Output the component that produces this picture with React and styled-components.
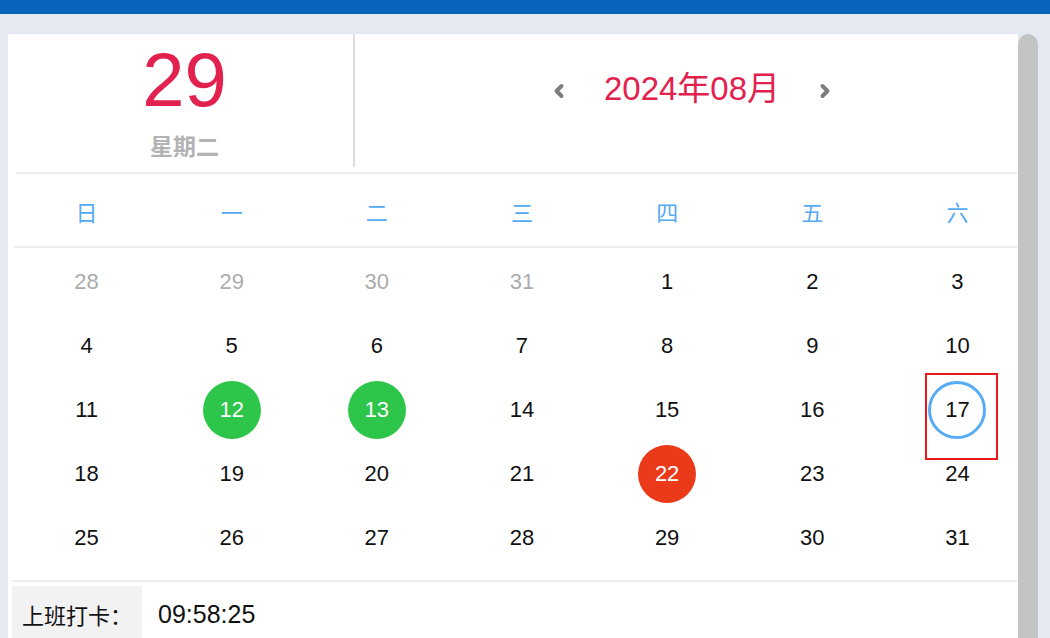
import styled, { createGlobalStyle } from "styled-components";

const GlobalStyle = createGlobalStyle`
  html, body {
    margin: 0;
    padding: 0;
    background: #e4e9f2;
    font-family: "Liberation Sans", "Noto Sans CJK SC", sans-serif;
    overflow: hidden;
  }
`;

const weekdays = ["日", "一", "二", "三", "四", "五", "六"];

// status: muted = other month, work = green, late = red, today = blue ring
const weeks = [
  [
    { d: 28, s: "muted" },
    { d: 29, s: "muted" },
    { d: 30, s: "muted" },
    { d: 31, s: "muted" },
    { d: 1 },
    { d: 2 },
    { d: 3 },
  ],
  [{ d: 4 }, { d: 5 }, { d: 6 }, { d: 7 }, { d: 8 }, { d: 9 }, { d: 10 }],
  [
    { d: 11 },
    { d: 12, s: "work" },
    { d: 13, s: "work" },
    { d: 14 },
    { d: 15 },
    { d: 16 },
    { d: 17, s: "today", marked: true },
  ],
  [
    { d: 18 },
    { d: 19 },
    { d: 20 },
    { d: 21 },
    { d: 22, s: "late" },
    { d: 23 },
    { d: 24 },
  ],
  [{ d: 25 }, { d: 26 }, { d: 27 }, { d: 28 }, { d: 29 }, { d: 30 }, { d: 31 }],
];

const Chevron = ({ dir }) => (
  <svg width="12" height="16" viewBox="0 0 12 16">
    <path
      d={dir === "left" ? "M8.5 3 L3.5 8 L8.5 13" : "M3.5 3 L8.5 8 L3.5 13"}
      fill="none"
      stroke="#7d7d7d"
      strokeWidth="4"
      strokeLinecap="round"
      strokeLinejoin="round"
    />
  </svg>
);

export default function App() {
  return (
    <>
      <GlobalStyle />
      <TopBar />
      <Main>
        <Card>
          <Inner>
            <Header>
              <DateBlock>
                <BigDay>29</BigDay>
                <WeekName>星期二</WeekName>
              </DateBlock>
              <MonthBlock>
                <MonthNav>
                  <NavButton>
                    <Chevron dir="left" />
                  </NavButton>
                  <MonthTitle>2024年08月</MonthTitle>
                  <NavButton>
                    <Chevron dir="right" />
                  </NavButton>
                </MonthNav>
              </MonthBlock>
            </Header>
            <WeekRow>
              {weekdays.map((w) => (
                <WeekLabel key={w}>{w}</WeekLabel>
              ))}
            </WeekRow>
            <DayGrid>
              {weeks.flat().map((c, i) => (
                <DayCell key={i}>
                  <DayNum $status={c.s}>{c.d}</DayNum>
                  {c.marked && <Marker />}
                </DayCell>
              ))}
            </DayGrid>
          </Inner>
          <Footer>
            <PunchRow>
              <PunchLabel>上班打卡：</PunchLabel>
              <PunchTime>09:58:25</PunchTime>
            </PunchRow>
          </Footer>
        </Card>
        <ScrollThumb />
      </Main>
    </>
  );
}

const TopBar = styled.div`
  height: 14px;
  background: #0764bb;
`;

const Main = styled.div`
  display: flex;
  align-items: stretch;
  height: 604px;
  padding: 20px 0 0 8px;
`;

const Card = styled.div`
  width: 1010px;
  background: #fff;
  overflow: hidden;
  display: flex;
  flex-direction: column;
`;

const ScrollThumb = styled.div`
  width: 20px;
  background: #c4c4c4;
  border-radius: 10px 10px 0 0;
`;

const Inner = styled.div`
  width: 1017px;
  margin-left: 8px;
`;

const Header = styled.div`
  display: flex;
  height: 138px;
  border-bottom: 2px solid #eeeeee;
`;

const DateBlock = styled.div`
  box-sizing: border-box;
  width: 339px;
  height: 133px;
  border-right: 2px solid #dddddd;
  display: flex;
  flex-direction: column;
  align-items: center;
  padding-top: 8px;
`;

const BigDay = styled.div`
  font-size: 76px;
  line-height: 76px;
  color: #e2214e;
`;

const WeekName = styled.div`
  margin-top: 17px;
  font-size: 23px;
  line-height: 24px;
  font-weight: bold;
  color: #b3b3b3;
`;

const MonthBlock = styled.div`
  flex: 1;
  display: flex;
  justify-content: center;
  padding-top: 38px;
`;

const MonthNav = styled.div`
  display: flex;
  align-items: flex-start;
  gap: 39px;
  height: 34px;
  margin-left: -4px;
`;

const NavButton = styled.span`
  display: flex;
  padding-top: 11px;
  cursor: pointer;
`;

const MonthTitle = styled.div`
  font-size: 33px;
  line-height: 33px;
  color: #e2214e;
`;

const WeekRow = styled.div`
  display: grid;
  grid-template-columns: repeat(7, 1fr);
  width: 1016px;
  height: 72px;
  margin-left: -2px;
  border-bottom: 2px solid #eeeeee;
`;

const WeekLabel = styled.div`
  display: flex;
  align-items: center;
  justify-content: center;
  padding-top: 2px;
  font-size: 22px;
  color: #55aaf5;
`;

const DayGrid = styled.div`
  display: grid;
  grid-template-columns: repeat(7, 1fr);
  grid-auto-rows: 64px;
  width: 1016px;
  margin-left: -2px;
  padding: 2px 0 10px;
`;

const DayCell = styled.div`
  position: relative;
  display: flex;
  align-items: center;
  justify-content: center;
`;

const statusStyles = {
  muted: "color: #acacac;",
  work: "background: #2dc54a; color: #fff;",
  late: "background: #ea3a1a; color: #fff;",
  today: "border: 3.5px solid #58acf5; color: #111;",
};

const DayNum = styled.div`
  box-sizing: border-box;
  width: 58px;
  height: 58px;
  border-radius: 50%;
  display: flex;
  align-items: center;
  justify-content: center;
  font-size: 22px;
  color: #111;
  ${({ $status }) => statusStyles[$status] || ""}
`;

const Marker = styled.div`
  position: absolute;
  left: 40px;
  top: -5px;
  width: 73px;
  height: 87px;
  box-sizing: border-box;
  border: 2px solid #e8191a;
  pointer-events: none;
`;

const Footer = styled.div`
  margin-left: 4px;
  border-top: 2px solid #eeeeee;
  padding-top: 4px;
  flex: 1;
`;

const PunchRow = styled.div`
  display: flex;
  align-items: stretch;
  height: 60px;
  font-size: 22px;
  color: #111;
`;

const PunchLabel = styled.div`
  width: 130px;
  box-sizing: border-box;
  padding-left: 10px;
  background: #f2f2f2;
  display: flex;
  align-items: center;
  padding-bottom: 4px;
`;

const PunchTime = styled.div`
  display: flex;
  align-items: center;
  padding-left: 16px;
  padding-bottom: 4px;
  font-size: 25px;
`;
